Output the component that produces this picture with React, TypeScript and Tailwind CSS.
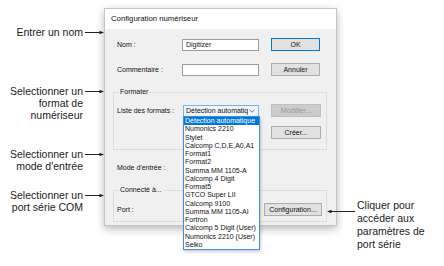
const FORMATS = [
  'Détection automatique',
  'Numonics 2210',
  'Stylet',
  'Calcomp C,D,E,A0,A1',
  'Format1',
  'Format2',
  'Summa MM 1105-A',
  'Calcomp 4 Digit',
  'Format5',
  'GTCO Super LII',
  'Calcomp 9100',
  'Summa MM 1105-AI',
  'Fortron',
  'Calcomp 5 Digit (User)',
  'Numonics 2210 (User)',
  'Seiko',
]

function ArrowRight() {
  return (
    <svg width="19" height="5" viewBox="0 0 19 5" className="ml-[2px] mt-[4px] shrink-0">
      <line x1="0" y1="2.5" x2="15" y2="2.5" stroke="#222" strokeWidth="1" />
      <path d="M14.5 0.8 L19 2.5 L14.5 4.2 Z" fill="#222" />
    </svg>
  )
}

function ArrowLeft() {
  return (
    <svg width="28" height="5" viewBox="0 0 28 5" className="mt-[10px] shrink-0">
      <line x1="4" y1="2.5" x2="28" y2="2.5" stroke="#222" strokeWidth="1" />
      <path d="M4.5 0.8 L0 2.5 L4.5 4.2 Z" fill="#222" />
    </svg>
  )
}

function Callout({ lines, className = '' }: { lines: string[]; className?: string }) {
  return (
    <div className={`flex items-start ${className}`}>
      <div className="w-[84px] text-right text-[10.5px] leading-[12px] text-[#1a1a1a]">
        {lines.map((l) => (
          <div key={l} className="whitespace-nowrap">{l}</div>
        ))}
      </div>
      <ArrowRight />
    </div>
  )
}

function Button({ label, className = '' }: { label: string; className?: string }) {
  return (
    <div
      className={`flex h-[13px] items-center justify-center border text-[7px] leading-none ${className}`}
    >
      {label}
    </div>
  )
}

export default function App() {
  return (
    <div className="flex h-[266px] w-[444px] items-start overflow-hidden bg-white font-['Liberation_Sans',Arial,sans-serif]">
      {/* left callouts */}
      <div className="flex w-[104px] shrink-0 flex-col">
        <Callout lines={['Entrer un nom']} className="mt-[26px]" />
        <Callout lines={['Selectionner un', 'format de', 'numériseur']} className="mt-[47px]" />
        <Callout lines={['Selectionner un', "mode d'entrée"]} className="mt-[27px]" />
        <Callout lines={['Selectionner un', 'port série COM']} className="mt-[17px]" />
      </div>

      {/* dialog */}
      <div className="relative z-10 mt-[8px] flex h-[218px] w-[233px] shrink-0 flex-col border border-[#c4c4c4] bg-[#f0f0f0] text-[7px] leading-[8px] text-[#111] shadow-[0_3px_8px_rgba(0,0,0,0.28)]">
        <div className="flex h-[20px] items-center bg-white pl-[6px] text-[7.75px]">Configuration numériseur</div>

        <div className="flex flex-col pl-[8px] pt-[9px]">
          <div className="flex h-[13px] items-center pl-[4px]">
            <span className="w-[65px]">Nom :</span>
            <div className="flex h-[12px] w-[77px] items-center border border-[#9c9c9c] bg-white pl-[3px]">Digitizer</div>
            <Button label="OK" className="ml-[12px] w-[49px] border-[#0078d7] bg-[#e1e1e1]" />
          </div>
          <div className="mt-[12px] flex h-[13px] items-center pl-[4px]">
            <span className="w-[65px]">Commentaire :</span>
            <div className="h-[12px] w-[77px] border border-[#9c9c9c] bg-white" />
            <Button label="Annuler" className="ml-[12px] w-[49px] border-[#adadad] bg-[#e1e1e1]" />
          </div>

          <fieldset className="mt-[12px] w-[214px] border border-[#dcdcdc] pb-[10px] pl-[3px]">
            <legend className="ml-[2px] px-[1px] leading-[8px]">Formater</legend>
            <div className="mt-[8px] flex h-[13px] items-center">
              <span className="w-[66px]">Liste des formats :</span>
              <div className="flex h-[12px] w-[76px] items-center justify-between overflow-hidden border border-[#7ab3e6] bg-[#eef5fc] pl-[2px] pr-[3px]">
                <span className="overflow-hidden whitespace-nowrap">Détection automatiq</span>
                <svg width="6" height="4" viewBox="0 0 6 4" className="shrink-0">
                  <path d="M0.5 0.8 L3 3.2 L5.5 0.8" fill="none" stroke="#555" strokeWidth="0.8" />
                </svg>
              </div>
              <Button label="Modifier..." className="ml-[12px] w-[50px] border-[#bfbfbf] bg-[#cccccc] text-[#9a9a9a]" />
            </div>
            <div className="mt-[9px] flex h-[13px] items-center">
              <Button label="Créer..." className="ml-[154px] w-[50px] border-[#adadad] bg-[#e1e1e1]" />
            </div>
          </fieldset>

          <div className="mt-[14px] pl-[4px]">Mode d'entrée :</div>

          <fieldset className="mt-[14px] w-[214px] border border-[#dcdcdc] pb-[5px] pl-[3px] pr-[4px]">
            <legend className="ml-[2px] px-[1px] leading-[8px]">Connecté à...</legend>
            <div className="mt-[9px] flex h-[13px] items-center justify-between">
              <span>Port :</span>
              <Button label="Configuration..." className="w-[58px] border-[#adadad] bg-[#e1e1e1]" />
            </div>
          </fieldset>
        </div>

        {/* open dropdown list */}
        <div className="absolute left-[78px] top-[107px] w-[77px] border border-[#3f8fdc] bg-white shadow-[1px_2px_3px_rgba(0,0,0,0.2)]">
          {FORMATS.map((f, i) => (
            <div
              key={f}
              className={`h-[8.25px] whitespace-nowrap pl-[1px] text-[7px] leading-[8.25px] ${i === 0 ? 'bg-[#0078d7] text-white' : 'text-[#111]'}`}
            >
              {f}
            </div>
          ))}
        </div>
      </div>

      {/* right callout */}
      <div className="z-20 -ml-[10px] mt-[199px] flex items-start">
        <ArrowLeft />
        <div className="ml-[2px] text-[10.5px] leading-[13px] text-[#1a1a1a]">
          <div>Cliquer pour</div>
          <div>accéder aux</div>
          <div>paramètres de</div>
          <div>port série</div>
        </div>
      </div>
    </div>
  )
}
